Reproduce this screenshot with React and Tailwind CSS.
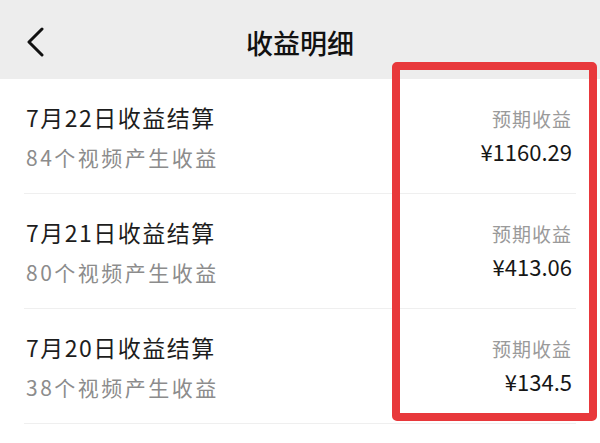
const rows = [
  { date: "7月22日收益结算", count: "84个视频产生收益", amount: "¥1160.29" },
  { date: "7月21日收益结算", count: "80个视频产生收益", amount: "¥413.06" },
  { date: "7月20日收益结算", count: "38个视频产生收益", amount: "¥134.5" },
];

const font = { fontFamily: '"Noto Sans CJK SC", "Noto Sans", sans-serif' };

function Row({ item }) {
  return (
    <div className="h-[115px] mx-[24px] border-b border-[#efefef] flex justify-between">
      <div className="pt-[24px] pl-[2px]">
        <div className="text-[23px] leading-[28px] tracking-[1.5px] text-[#1d1d1d]">{item.date}</div>
        <div className="mt-[12px] text-[21px] leading-[28px] tracking-[2.5px] text-[#8c8c8c]">
          {item.count}
        </div>
      </div>
      <div className="pt-[27px] pr-[4px] text-right">
        <div className="text-[19px] leading-[26px] tracking-[1px] text-[#9a9a9a]">预期收益</div>
        <div className="mt-[6px] text-[22px] leading-[26px] text-[#161616]">
          {item.amount}
        </div>
      </div>
    </div>
  );
}

export default function App() {
  return (
    <div className="relative w-[600px] h-[443px] bg-white overflow-hidden" style={font}>
      <div className="h-[79px] bg-[#ededed] flex items-center">
        <div className="w-[70px] pl-[25px] pt-[4px]">
          <svg width="20" height="30" viewBox="0 0 20 30" fill="none">
            <path d="M17 2 L4 15 L17 28" stroke="#111" strokeWidth="3" strokeLinecap="round" strokeLinejoin="round" />
          </svg>
        </div>
        <div className="flex-1 text-center text-[27px] leading-[34px] font-medium text-[#111] pt-[6px]">
          收益明细
        </div>
        <div className="w-[70px]" />
      </div>
      {rows.map((r) => (
        <Row key={r.date} item={r} />
      ))}
      <div className="absolute left-[392px] top-[62px] w-[205px] h-[359px] border-[8px] border-[#e8383b] rounded-[5px]" />
    </div>
  );
}
